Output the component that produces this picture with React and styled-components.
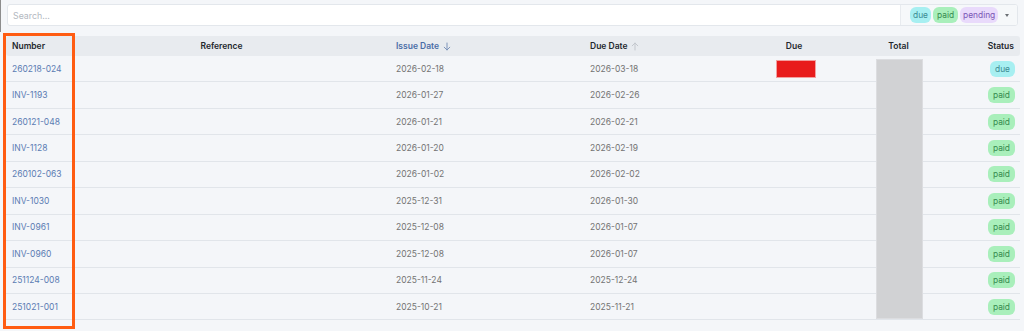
import React from "react";
import styled, { createGlobalStyle } from "styled-components";

const Global = createGlobalStyle`
  html, body { margin: 0; padding: 0; background: #f4f6f9; }
  body { font-family: Inter, "Noto Sans", "Liberation Sans", sans-serif; font-size: 8.5px; color: #222; }
  * { box-sizing: border-box; }
`;

const Page = styled.div`
  position: relative;
  width: 1024px;
  height: 331px;
  overflow: hidden;
  padding: 0 4px 0 0;
`;

const TopBar = styled.div`
  border-left: 1px solid #8d8d8d;
  padding: 4px 2px 0 6px;
  height: 32px;
`;

const SearchBox = styled.div`
  display: flex;
  height: 22px;
  background: #fff;
  border: 1px solid #e3e7ec;
  border-radius: 3px;
  overflow: hidden;
`;

const SearchInput = styled.input`
  flex: 1;
  border: none;
  outline: none;
  background: transparent;
  padding: 0 5px;
  font: inherit;
  font-size: 8.8px;
  color: #333;
  &::placeholder { color: #b3b8bf; }
`;

const TagArea = styled.div`
  display: flex;
  align-items: center;
  gap: 2px;
  width: 117px;
  padding: 0 0 0 9px;
  background: #f6f8fa;
  border-left: 1px solid #e8ebef;
`;

const palette = {
  due: { bg: "#a7eff1", fg: "#3c8c92" },
  paid: { bg: "#a9efbb", fg: "#358b4e" },
  pending: { bg: "#e9dafb", fg: "#7a56b6" },
};

const Tag = styled.span`
  display: inline-flex;
  align-items: center;
  height: 16px;
  padding: 0 ${(p) => p.$pad ?? 5}px;
  border-radius: 6px;
  font-size: 8.4px;
  background: ${(p) => palette[p.$kind].bg};
  color: ${(p) => palette[p.$kind].fg};
`;

const Caret = styled.span`
  margin-left: 5px;
  width: 0;
  height: 0;
  border-left: 2.5px solid transparent;
  border-right: 2.5px solid transparent;
  border-top: 3.5px solid #6b6f75;
`;

const Table = styled.div`
  position: relative;
  margin: 4px 0 0 6px;
  width: 1014px;
`;

const cols = "66px 299px 213px 157px 106px 103px 70px";

const HeaderRow = styled.div`
  display: grid;
  grid-template-columns: ${cols};
  height: 20px;
  align-items: center;
  background: #e8ebef;
  border-radius: 3px;
  font-weight: 600;
  color: #23272d;
`;

const Row = styled.div`
  display: grid;
  grid-template-columns: ${cols};
  height: 26.45px;
  align-items: center;
  border-bottom: 1px solid #e1e5ea;
`;

const Cell = styled.div`
  display: flex;
  align-items: center;
  justify-content: ${(p) => p.$align === "center" ? "center" : p.$align === "right" ? "flex-end" : "flex-start"};
  padding-left: ${(p) => p.$pl ?? 6}px;
  padding-right: ${(p) => p.$pr ?? 6}px;
  white-space: nowrap;
  color: ${(p) => p.$color || "inherit"};
  gap: 4px;
`;

const Link = styled.a`
  color: #5b7cb3;
  text-decoration: none;
`;

const DateText = styled.span`
  color: #737373;
`;

const RedBlock = styled.span`
  display: block;
  width: 40px;
  height: 18px;
  margin-left: 4px;
  background: #e81c1c;
  border: 1px solid #f2a0a0;
`;

const GrayBlock = styled.div`
  position: absolute;
  left: 870px;
  top: 23px;
  width: 47px;
  height: 260px;
  background: #d1d2d4;
  border: 1px solid #dcdde0;
`;

const Highlight = styled.div`
  position: absolute;
  left: 3px;
  top: 33px;
  width: 72px;
  height: 296px;
  border: 3px solid #ff5c12;
  pointer-events: none;
`;

const SortIcon = ({ dir, color }) => (
  <svg width="8" height="9" viewBox="0 0 8 9" fill="none" stroke={color} strokeWidth="1" strokeLinecap="round" strokeLinejoin="round">
    {dir === "down" ? (
      <>
        <path d="M4 1v7" />
        <path d="M1.2 5.2L4 8l2.8-2.8" />
      </>
    ) : (
      <>
        <path d="M4 8V1" />
        <path d="M1.2 3.8L4 1l2.8 2.8" />
      </>
    )}
  </svg>
);

const rows = [
  ["260218-024", "2026-02-18", "2026-03-18", "due"],
  ["INV-1193", "2026-01-27", "2026-02-26", "paid"],
  ["260121-048", "2026-01-21", "2026-02-21", "paid"],
  ["INV-1128", "2026-01-20", "2026-02-19", "paid"],
  ["260102-063", "2026-01-02", "2026-02-02", "paid"],
  ["INV-1030", "2025-12-31", "2026-01-30", "paid"],
  ["INV-0961", "2025-12-08", "2026-01-07", "paid"],
  ["INV-0960", "2025-12-08", "2026-01-07", "paid"],
  ["251124-008", "2025-11-24", "2025-12-24", "paid"],
  ["251021-001", "2025-10-21", "2025-11-21", "paid"],
];

export default function App() {
  return (
    <>
      <Global />
      <Page>
        <TopBar>
          <SearchBox>
            <SearchInput placeholder="Search..." />
            <TagArea>
              <Tag $kind="due" $pad={3}>due</Tag>
              <Tag $kind="paid" $pad={4}>paid</Tag>
              <Tag $kind="pending" $pad={3}>pending</Tag>
              <Caret />
            </TagArea>
          </SearchBox>
        </TopBar>
        <Table>
          <HeaderRow>
            <Cell>Number</Cell>
            <Cell $align="center">Reference</Cell>
            <Cell $pl={25} $color="#4a6da6">Issue Date <SortIcon dir="down" color="#7f95bb" /></Cell>
            <Cell>Due Date <SortIcon dir="up" color="#c3c7cd" /></Cell>
            <Cell $align="center">Due</Cell>
            <Cell $align="center">Total</Cell>
            <Cell $align="right">Status</Cell>
          </HeaderRow>
          {rows.map(([num, issue, due, status], i) => (
            <Row key={num}>
              <Cell><Link href="#">{num}</Link></Cell>
              <Cell />
              <Cell $pl={25}><DateText>{issue}</DateText></Cell>
              <Cell><DateText>{due}</DateText></Cell>
              <Cell $align="center">{i === 0 && <RedBlock />}</Cell>
              <Cell />
              <Cell $align="right" $pr={5}><Tag $kind={status}>{status}</Tag></Cell>
            </Row>
          ))}
          <GrayBlock />
        </Table>
        <Highlight />
      </Page>
    </>
  );
}
